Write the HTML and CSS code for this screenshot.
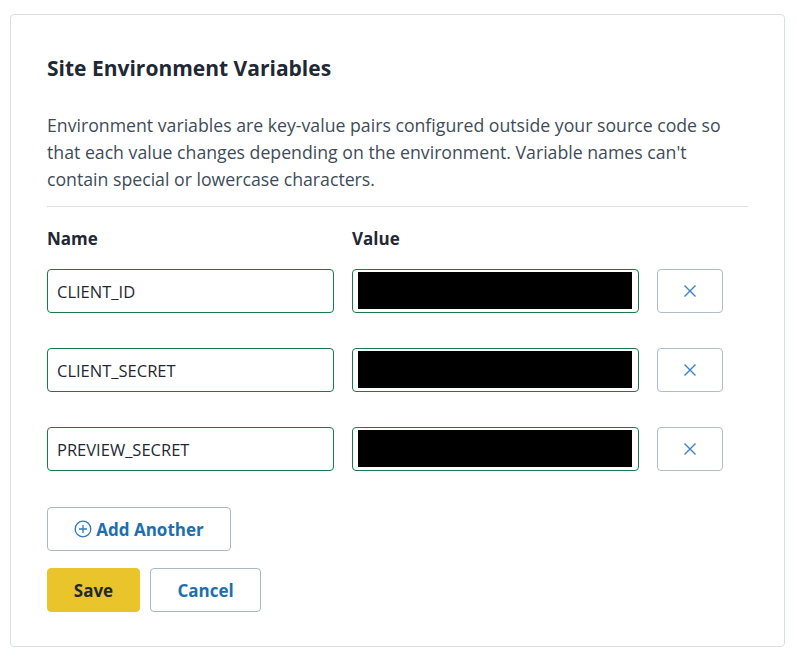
FILE: index.html
```html
<!DOCTYPE html>
<html>
<head>
<meta charset="utf-8">
<link rel="stylesheet" href="styles.css">
</head>
<body>
<div class="card">
  <h2 class="title">Site Environment Variables</h2>
  <p class="desc">Environment variables are key-value pairs configured outside your source code so that each value changes depending on the environment. Variable names can't contain special or lowercase characters.</p>
  <hr class="rule">
  <div class="grid">
    <div class="label">Name</div>
    <div class="label">Value</div>
    <div></div>

    <div class="field">CLIENT_ID</div>
    <div class="field value"><div class="redact"></div></div>
    <button class="remove"><svg width="14" height="14" viewBox="0 0 14 14"><path d="M1.5 1.5L12.5 12.5M12.5 1.5L1.5 12.5" stroke="#3b82c4" stroke-width="1.4" fill="none"/></svg></button>

    <div class="field">CLIENT_SECRET</div>
    <div class="field value"><div class="redact"></div></div>
    <button class="remove"><svg width="14" height="14" viewBox="0 0 14 14"><path d="M1.5 1.5L12.5 12.5M12.5 1.5L1.5 12.5" stroke="#3b82c4" stroke-width="1.4" fill="none"/></svg></button>

    <div class="field">PREVIEW_SECRET</div>
    <div class="field value"><div class="redact"></div></div>
    <button class="remove"><svg width="14" height="14" viewBox="0 0 14 14"><path d="M1.5 1.5L12.5 12.5M12.5 1.5L1.5 12.5" stroke="#3b82c4" stroke-width="1.4" fill="none"/></svg></button>
  </div>
  <button class="btn add"><svg width="18" height="18" viewBox="0 0 18 18"><circle cx="9" cy="9" r="7.8" stroke="#2e7bbf" stroke-width="1.3" fill="none"/><path d="M9 5v8M5 9h8" stroke="#2e7bbf" stroke-width="1.3"/></svg><span>Add Another</span></button>
  <div class="actions">
    <button class="btn save">Save</button>
    <button class="btn cancel">Cancel</button>
  </div>
</div>
</body>
</html>
```
FILE: styles.css
```css
* { box-sizing: border-box; }
body {
  margin: 0;
  background: #ffffff;
  font-family: "Open Sans", "Noto Sans", sans-serif;
  color: #1f2933;
}
.card {
  margin: 14px 11px 0 10px;
  width: 775px;
  height: 633px;
  border: 1px solid #d6e0e0;
  border-radius: 4px;
  padding: 39px 36px 0 36px;
}
.title {
  margin: 0 0 30px 0;
  font-size: 21px;
  line-height: 28px;
  font-weight: 700;
  color: #1f2933;
}
.desc {
  margin: 0;
  font-size: 17.7px;
  line-height: 27px;
  color: #3e4c59;
}
.rule {
  margin: 13px 0 0 0;
  border: 0;
  border-top: 1px solid #d9e2e6;
}
.grid {
  display: grid;
  grid-template-columns: 287px 287px 66px;
  column-gap: 18px;
  row-gap: 35px;
  margin-top: 20px;
}
.label {
  font-size: 17px;
  font-weight: 700;
  line-height: 24px;
  margin-bottom: -17px;
  color: #1f2933;
}
.field {
  height: 44px;
  border: 1px solid #1b7a4a;
  border-radius: 4px;
  padding: 0 9px;
  display: flex;
  align-items: center;
  font-size: 16.5px;
  color: #1f2933;
}
.field.value {
  padding: 2px 6px 3px 5px;
  align-items: stretch;
}
.redact {
  flex: 1;
  background: #000;
}
.remove {
  height: 44px;
  border: 1px solid #aebdc8;
  border-radius: 4px;
  background: #fff;
  display: flex;
  align-items: center;
  justify-content: center;
  padding: 0;
}
.btn {
  height: 44px;
  border: 1px solid #a9b8c4;
  border-radius: 4px;
  background: #fff;
  font-family: "Open Sans", "Noto Sans", sans-serif;
  font-size: 17px;
  font-weight: 700;
  color: #1d6fb0;
  padding: 0;
}
.add {
  margin-top: 36px;
  width: 184px;
  display: flex;
  align-items: center;
  justify-content: center;
  gap: 4px;
}
.actions {
  margin-top: 17px;
  display: flex;
  gap: 10px;
}
.save {
  width: 93px;
  background: #e9c42a;
  border-color: #e9c42a;
  color: #1f2933;
}
.cancel {
  width: 111px;
}
```
